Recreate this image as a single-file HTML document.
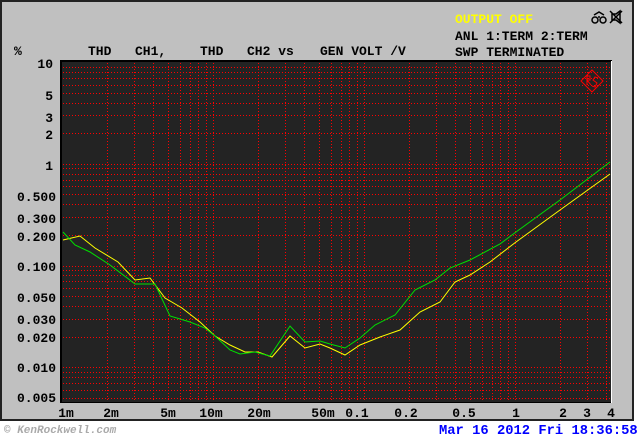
<!DOCTYPE html>
<html><head><style>
body{margin:0;width:640px;height:436px;background:#fff;overflow:hidden;font-family:"Liberation Mono",monospace;}
</style></head><body>
<svg width="640" height="436" xmlns="http://www.w3.org/2000/svg" font-family="Liberation Mono, DejaVu Sans Mono, monospace" font-size="13" font-weight="bold">
<rect x="0" y="0" width="640" height="436" fill="#fff"/>
<rect x="1" y="1" width="632" height="419" fill="#c0c0c0" stroke="#222" stroke-width="2"/>
<rect x="60" y="60" width="552" height="343" fill="#000"/>
<rect x="62" y="62" width="549" height="340" fill="#232323"/>
<line x1="611.5" y1="61" x2="611.5" y2="403" stroke="#fff"/>
<g id="grid" stroke="#f00" stroke-width="1" stroke-dasharray="1,2"></g>
<g fill="none" stroke="#f00" stroke-width="1">
<path d="M592 70 L603 81 L592 92 L581 81 Z"/>
<path d="M587 76 L587 85 M587 76 L590 76 L590 80 L587 80 L591 85 M598 78 L595 77 L593 80 L597 83 L595 87 L592 86"/>
</g>
<polyline fill="none" stroke="#ffff00" stroke-width="1" points="63,240 80,236 95,248 118,262 135,280 150,278 165,298 182,308 200,322 215,336 230,345 245,352 258,352 272,357 290,336 305,348 320,344 330,348 345,355 360,345 380,337 400,330 420,312 440,302 455,282 470,275 490,262 516,242 560,210 610,174"/>
<polyline fill="none" stroke="#00e000" stroke-width="1" points="63,232 75,245 90,252 110,265 135,284 155,284 170,316 190,322 205,328 215,336 230,350 240,354 255,352 270,356 290,326 305,342 320,341 330,344 345,348 360,338 375,325 395,315 415,290 435,280 450,268 470,260 500,244 516,232 560,200 610,162"/>
<g fill="#000">
<text x="14" y="55">%</text>
<text x="88" y="55">THD</text><text x="135" y="55">CH1,</text>
<text x="200" y="55">THD</text><text x="247" y="55">CH2 vs</text>
<text x="320" y="55">GEN VOLT /V</text>
<text x="455" y="40">ANL 1:TERM 2:TERM</text>
<text x="455" y="56">SWP TERMINATED</text>
</g>
<text x="455" y="23" fill="#ffff00">OUTPUT OFF</text>
<g fill="none" stroke="#000" stroke-width="1.5">
<circle cx="595" cy="20" r="3"/><circle cx="603" cy="20" r="3"/><path d="M594 15 L599 12 L604 15 M598 17 L600 17"/>
<path d="M612 14 L616 14 L620 11 L620 23 L616 20 L612 20 Z M610 11 L622 23 M622 11 L610 23"/>
</g>
<g fill="#000" text-anchor="end">
<text x="53" y="68">10</text><text x="53" y="100">5</text><text x="53" y="122">3</text><text x="53" y="139">2</text>
<text x="53" y="170">1</text><text x="56" y="201">0.500</text><text x="56" y="223">0.300</text><text x="56" y="241">0.200</text>
<text x="56" y="271">0.100</text><text x="56" y="302">0.050</text><text x="56" y="324">0.030</text><text x="56" y="342">0.020</text>
<text x="56" y="372">0.010</text><text x="56" y="402">0.005</text>
</g>
<g fill="#000" text-anchor="middle">
<text x="66" y="417">1m</text><text x="111" y="417">2m</text><text x="168" y="417">5m</text><text x="211" y="417">10m</text>
<text x="259" y="417">20m</text><text x="323" y="417">50m</text><text x="357" y="417">0.1</text><text x="406" y="417">0.2</text>
<text x="464" y="417">0.5</text><text x="516" y="417">1</text><text x="563" y="417">2</text><text x="587" y="417">3</text><text x="611" y="417">4</text>
</g>
<text x="4" y="433" fill="#aaa" font-size="11" font-style="italic">© KenRockwell.com</text>
<text x="439" y="434" fill="#0000ff" font-size="13.8">Mar 16 2012 Fri 18:36:58</text>
</svg>
<script>
var g=document.getElementById('grid'),s='';
function X(v){return 62+Math.log10(v/0.001)*151;}
function Y(v){return 62+Math.log10(10/v)*101.8;}
[0.001,0.01,0.1,1].forEach(function(d){for(var i=1;i<10;i++){var v=d*i;if(v>4.01)return;var x=Math.round(X(v))+0.5;if(x>63&&x<610)s+='<line x1="'+x+'" y1="63" x2="'+x+'" y2="402"/>';}});
[0.001,0.01,0.1,1].forEach(function(d){for(var i=1;i<10;i++){var v=d*i;if(v<0.005||v>10)continue;var y=Math.round(Y(v))+0.5;if(y>63&&y<401)s+='<line x1="63" y1="'+y+'" x2="611" y2="'+y+'"/>';}});
g.innerHTML=s;
</script>
</body></html>
